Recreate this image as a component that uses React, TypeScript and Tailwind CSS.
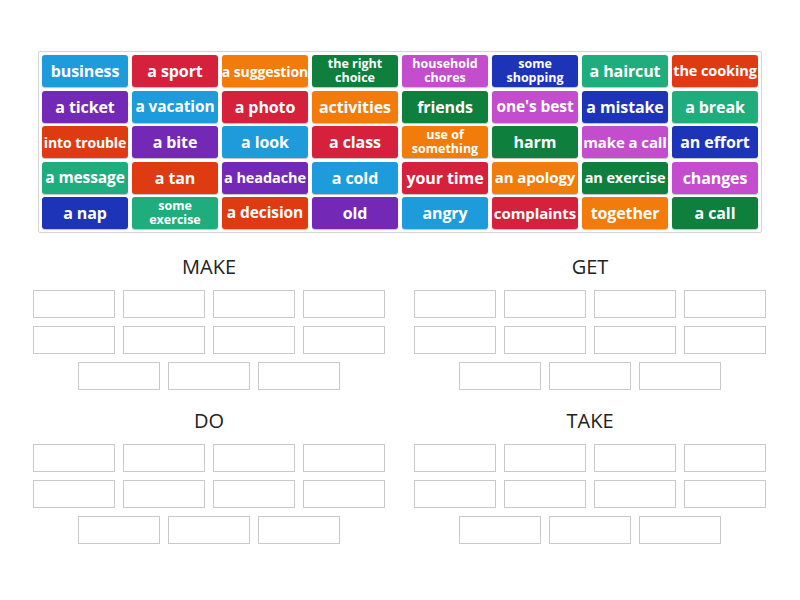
import React from "react";

type Tile = { t: string; c: string; s?: string };

const BLUE = "bg-[#1e9bdb]";
const RED = "bg-[#d6213c]";
const ORANGE = "bg-[#f27c0b]";
const DKGREEN = "bg-[#0e7f3d]";
const MAGENTA = "bg-[#c34dcd]";
const DKBLUE = "bg-[#1d34b8]";
const TEAL = "bg-[#1fad7e]";
const REDOR = "bg-[#df3b13]";
const PURPLE = "bg-[#7429b6]";

const tiles: Tile[] = [
  { t: "business", c: BLUE },
  { t: "a sport", c: RED },
  { t: "a suggestion", c: ORANGE, s: "text-[14px]" },
  { t: "the right choice", c: DKGREEN, s: "two" },
  { t: "household chores", c: MAGENTA, s: "two" },
  { t: "some shopping", c: DKBLUE, s: "two" },
  { t: "a haircut", c: TEAL },
  { t: "the cooking", c: REDOR, s: "text-[14.5px]" },

  { t: "a ticket", c: PURPLE },
  { t: "a vacation", c: BLUE, s: "text-[15.5px]" },
  { t: "a photo", c: RED },
  { t: "activities", c: ORANGE },
  { t: "friends", c: DKGREEN },
  { t: "one's best", c: MAGENTA, s: "text-[15.5px]" },
  { t: "a mistake", c: DKBLUE },
  { t: "a break", c: TEAL },

  { t: "into trouble", c: REDOR, s: "text-[14px]" },
  { t: "a bite", c: PURPLE },
  { t: "a look", c: BLUE },
  { t: "a class", c: RED },
  { t: "use of something", c: ORANGE, s: "two" },
  { t: "harm", c: DKGREEN },
  { t: "make a call", c: MAGENTA, s: "text-[15px]" },
  { t: "an effort", c: DKBLUE },

  { t: "a message", c: TEAL, s: "text-[15.5px]" },
  { t: "a tan", c: REDOR },
  { t: "a headache", c: PURPLE, s: "text-[14.5px]" },
  { t: "a cold", c: BLUE },
  { t: "your time", c: RED },
  { t: "an apology", c: ORANGE, s: "text-[15px]" },
  { t: "an exercise", c: DKGREEN, s: "text-[14.5px]" },
  { t: "changes", c: MAGENTA },

  { t: "a nap", c: DKBLUE },
  { t: "some exercise", c: TEAL, s: "two" },
  { t: "a decision", c: REDOR, s: "text-[15.5px]" },
  { t: "old", c: PURPLE },
  { t: "angry", c: BLUE },
  { t: "complaints", c: RED, s: "text-[15px]" },
  { t: "together", c: ORANGE },
  { t: "a call", c: DKGREEN },
];

function TileBox({ tile }: { tile: Tile }) {
  const two = tile.s === "two";
  if (two) {
    const words = tile.t.split(" ");
    let l1 = words[0];
    let l2 = words.slice(1).join(" ");
    if (tile.t === "the right choice") {
      l1 = "the right";
      l2 = "choice";
    }
    if (tile.t === "use of something") {
      l1 = "use of";
      l2 = "something";
    }
    return (
      <div
        className={`${tile.c} h-[32px] rounded-[3px] flex flex-col items-center justify-center text-white font-bold text-[12.5px] leading-[14px] shadow-[0_1px_1px_rgba(0,0,0,0.25)]`}
      >
        <span>{l1}</span>
        <span>{l2}</span>
      </div>
    );
  }
  return (
    <div
      className={`${tile.c} h-[32px] rounded-[3px] flex items-center justify-center text-white font-bold whitespace-nowrap tracking-[-0.1px] shadow-[0_1px_1px_rgba(0,0,0,0.25)] ${tile.s ?? "text-[16px]"}`}
    >
      {tile.t}
    </div>
  );
}

function Box() {
  return <div className="w-[82px] h-[28px] border border-[#c9c9c9] bg-white" />;
}

function Group({ title }: { title: string }) {
  return (
    <div className="w-[352px] flex flex-col items-center">
      <div className="h-[28px] leading-[28px] text-[20px] text-[#222]">{title}</div>
      <div className="mt-[9px] flex flex-col gap-y-[8px] items-center">
        <div className="flex gap-x-[8px]">
          <Box />
          <Box />
          <Box />
          <Box />
        </div>
        <div className="flex gap-x-[8px]">
          <Box />
          <Box />
          <Box />
          <Box />
        </div>
        <div className="flex gap-x-[8px]">
          <Box />
          <Box />
          <Box />
        </div>
      </div>
    </div>
  );
}

export default function App() {
  return (
    <div
      className="w-[800px] h-[600px] bg-white overflow-hidden"
      style={{ fontFamily: '"Open Sans", "Noto Sans", sans-serif' }}
    >
      <div className="pt-[51px] pl-[38px]">
        <div className="w-[724px] border border-[#d4d4d4] rounded-[2px] p-[3px] grid grid-cols-8 gap-x-[4px] gap-y-[3.5px]">
          {tiles.map((tile, i) => (
            <TileBox key={i} tile={tile} />
          ))}
        </div>
      </div>
      <div className="mt-[20px] pl-[33px] grid grid-cols-[352px_352px] gap-x-[29px] gap-y-[17px]">
        <Group title="MAKE" />
        <Group title="GET" />
        <Group title="DO" />
        <Group title="TAKE" />
      </div>
    </div>
  );
}
